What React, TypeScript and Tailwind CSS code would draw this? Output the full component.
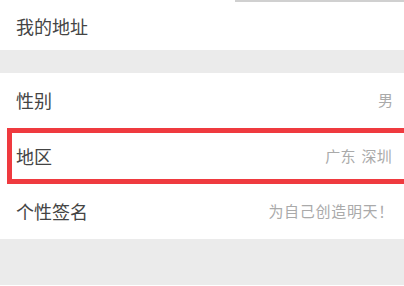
const rows = [
  { label: "性别", value: "男" },
  { label: "地区", value: "广东 深圳", highlight: true },
  { label: "个性签名", value: "为自己创造明天！" },
];

export default function App() {
  return (
    <div
      className="flex h-[286px] w-[404px] flex-col overflow-hidden bg-white"
      style={{ fontFamily: '"Noto Sans CJK SC", "Noto Sans", sans-serif' }}
    >
      <div className="flex h-[50px] flex-col bg-white">
        <div className="ml-auto h-[2px] w-[169px] bg-[#d0d0d0]" />
        <div className="flex flex-1 items-center pl-4 text-[18px] text-[#444]">我的地址</div>
      </div>
      <div className="h-[23px] bg-[#ebebeb]" />
      <div className="flex flex-col bg-white">
        {rows.map((row) =>
          row.highlight ? (
            <div
              key={row.label}
              className="-mr-2 ml-[7px] flex h-[56px] items-center justify-between border-[5px] border-[#ef3a3f] pl-[4px] pr-[15px]"
            >
              <span className="text-[18px] text-[#444]">{row.label}</span>
              <span className="text-[15px] tracking-[0.3px] text-[#aaa] [word-spacing:2px]">{row.value}</span>
            </div>
          ) : (
            <div key={row.label} className="flex h-[55px] items-center justify-between pl-4 pr-[11px]">
              <span className="text-[18px] text-[#444]">{row.label}</span>
              <span
                className={
                  row.label === "个性签名"
                    ? "-mr-[1px] text-[15px] tracking-[0.7px] text-[#aaa]"
                    : "text-[15px] text-[#aaa]"
                }
              >
                {row.value}
              </span>
            </div>
          ),
        )}
      </div>
      <div className="h-[46px] bg-[#ebebeb]" />
      <div className="flex-1 bg-white" />
    </div>
  );
}
